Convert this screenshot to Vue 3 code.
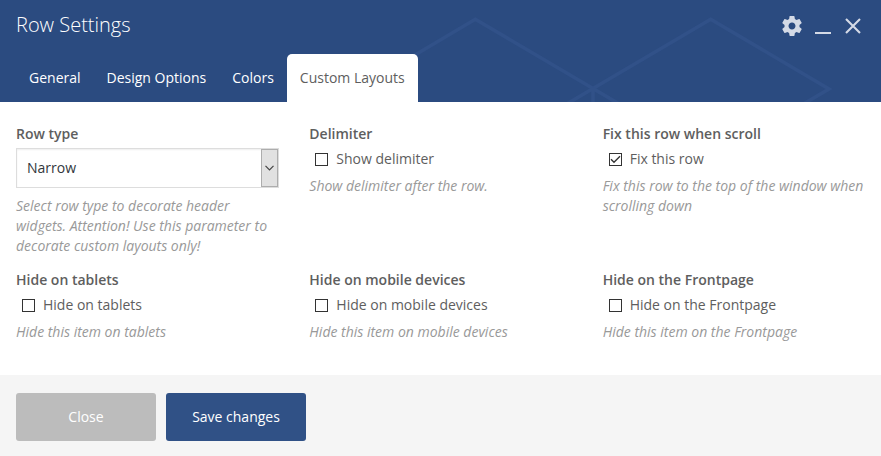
<script setup>
import { ref } from 'vue'

const tabs = ['General', 'Design Options', 'Colors', 'Custom Layouts']
const active = ref('Custom Layouts')
const rowType = ref('Narrow')
const fields = ref([
  { title: 'Row type', type: 'select', hint: 'Select row type to decorate header widgets. Attention! Use this parameter to decorate custom layouts only!' },
  { title: 'Delimiter', label: 'Show delimiter', checked: false, hint: 'Show delimiter after the row.' },
  { title: 'Fix this row when scroll', label: 'Fix this row', checked: true, hint: 'Fix this row to the top of the window when scrolling down' },
  { title: 'Hide on tablets', label: 'Hide on tablets', checked: false, hint: 'Hide this item on tablets' },
  { title: 'Hide on mobile devices', label: 'Hide on mobile devices', checked: false, hint: 'Hide this item on mobile devices' },
  { title: 'Hide on the Frontpage', label: 'Hide on the Frontpage', checked: false, hint: 'Hide this item on the Frontpage' }
])
</script>

<template>
  <div class="panel">
    <header class="header">
      <svg class="pattern" width="881" height="102" viewBox="0 0 881 102" fill="none" stroke="#315188" stroke-width="3.6">
        <path d="M357.5 89L475.3 19.3L593 88.5L710.7 19.3L829 89L711 158" />
        <path d="M475.3 158L593 88.5L710.7 158M593 88.5V110" />
      </svg>
      <div class="topbar">
        <h1 class="title">Row Settings</h1>
        <div class="controls">
          <svg class="gear" width="24" height="24" viewBox="0 0 24 24" fill="#d4dae6">
            <path d="M19.43 12.98c.04-.32.07-.64.07-.98s-.03-.66-.07-.98l2.11-1.65c.19-.15.24-.42.12-.64l-2-3.46c-.12-.22-.39-.3-.61-.22l-2.49 1c-.52-.4-1.08-.73-1.69-.98l-.38-2.65A.488.488 0 0 0 14 2h-4c-.25 0-.46.18-.49.42l-.38 2.65c-.61.25-1.17.59-1.69.98l-2.49-1c-.23-.09-.49 0-.61.22l-2 3.46c-.13.22-.07.49.12.64l2.11 1.65c-.04.32-.07.65-.07.98s.03.66.07.98l-2.11 1.65c-.19.15-.24.42-.12.64l2 3.46c.12.22.39.3.61.22l2.49-1c.52.4 1.08.73 1.69.98l.38 2.65c.03.24.24.42.49.42h4c.25 0 .46-.18.49-.42l.38-2.65c.61-.25 1.17-.59 1.69-.98l2.49 1c.23.09.49 0 .61-.22l2-3.46c.12-.22.07-.49-.12-.64l-2.11-1.65zM12 15.5c-1.93 0-3.5-1.57-3.5-3.5s1.57-3.5 3.5-3.5 3.5 1.57 3.5 3.5-1.57 3.5-3.5 3.5z" />
          </svg>
          <svg width="16" height="16" viewBox="0 0 16 16" fill="#d4dae6"><path d="M0 14h16v2H0z" /></svg>
          <svg width="16" height="16" viewBox="0 0 16 16" fill="none" stroke="#d4dae6" stroke-width="2.1"><path d="M1 1L15 15M15 1L1 15" /></svg>
        </div>
      </div>
      <nav class="tabs">
        <button v-for="tab in tabs" :key="tab" class="tab" :class="{ active: tab === active }" @click="active = tab">{{ tab }}</button>
      </nav>
    </header>

    <main class="fields">
      <section v-for="field in fields" :key="field.title" class="field">
        <h2 class="label">{{ field.title }}</h2>
        <div v-if="field.type === 'select'" class="select">
          <span class="value">{{ rowType }}</span>
          <span class="arrow">
            <svg width="9" height="6" viewBox="0 0 9 6" fill="none" stroke="#444" stroke-width="1.2"><path d="M.5 .8L4.5 4.8L8.5 .8" /></svg>
          </span>
        </div>
        <label v-else class="check" @click="field.checked = !field.checked">
          <span class="box">
            <svg v-if="field.checked" width="11" height="11" viewBox="0 0 11 11" fill="none" stroke="#333" stroke-width="1.4"><path d="M1 5.3L4 8.3L10 2.3" /></svg>
          </span>
          {{ field.label }}
        </label>
        <p class="hint">{{ field.hint }}</p>
      </section>
    </main>

    <footer class="footer">
      <button class="btn close">Close</button>
      <button class="btn save">Save changes</button>
    </footer>
  </div>
</template>

<style>
body {
  margin: 0;
  background: #fff;
}
</style>

<style scoped>
.panel {
  display: flex;
  flex-direction: column;
  width: 881px;
  height: 456px;
  overflow: hidden;
  font: 14px/20px "Open Sans", "Noto Sans", sans-serif;
  color: #5e5e5e;
}
.header {
  position: relative;
  display: flex;
  flex-direction: column;
  justify-content: space-between;
  height: 102px;
  flex: none;
  background: #2b4b80;
}
.pattern {
  position: absolute;
  inset: 0;
}
.topbar {
  position: relative;
  display: flex;
  justify-content: space-between;
  padding: 10px 20px 0 16px;
}
.title {
  margin: 0;
  font-size: 20px;
  line-height: 30px;
  font-weight: 300;
  color: #fff;
}
.controls {
  display: flex;
  align-items: center;
  height: 32px;
  gap: 14px;
}
.gear {
  margin-right: -3px;
}
.tabs {
  position: relative;
  display: flex;
  padding-left: 16px;
}
.tab {
  height: 48px;
  padding: 0 13px;
  border: 0;
  border-radius: 5px 5px 0 0;
  background: none;
  color: #fff;
  font: inherit;
}
.tab.active {
  background: #fff;
  color: #5e5e5e;
}
.fields {
  display: grid;
  grid-template-columns: repeat(3, 263.33px);
  grid-template-rows: 146px 82px;
  column-gap: 30px;
  padding: 22px 0 0 16px;
  height: 273px;
  box-sizing: border-box;
  flex: none;
}
.label {
  margin: 0;
  font-size: 14px;
  line-height: 20px;
  font-weight: 600;
}
.select {
  display: flex;
  justify-content: space-between;
  align-items: center;
  box-sizing: border-box;
  height: 40px;
  margin: 4px 0 8px;
  padding-left: 10px;
  border: 1px solid #ddd;
  box-shadow: inset 0 1px 2px rgba(0, 0, 0, .07);
  color: #32373c;
}
.arrow {
  display: flex;
  align-items: center;
  justify-content: center;
  box-sizing: border-box;
  width: 17px;
  height: 38px;
  border: 1px solid #adadad;
  background: #e1e1e1;
}
.check {
  display: flex;
  align-items: center;
  gap: 8px;
  height: 20px;
  margin: 5px 0 7px 6px;
}
.box {
  box-sizing: border-box;
  width: 13px;
  height: 13px;
  margin-top: 1px;
  border: 1px solid #333;
  background: #fff;
}
.box svg {
  display: block;
}
.hint {
  margin: 0;
  font-style: italic;
  color: #999;
}
.footer {
  display: flex;
  gap: 10px;
  flex: 1;
  padding: 18px 16px 0;
  background: #f5f5f5;
}
.btn {
  width: 140px;
  height: 48px;
  padding: 0;
  border: 0;
  border-radius: 3px;
  color: #fff;
  font: inherit;
}
.close {
  background: #bcbcbc;
}
.save {
  background: #305186;
}
</style>
